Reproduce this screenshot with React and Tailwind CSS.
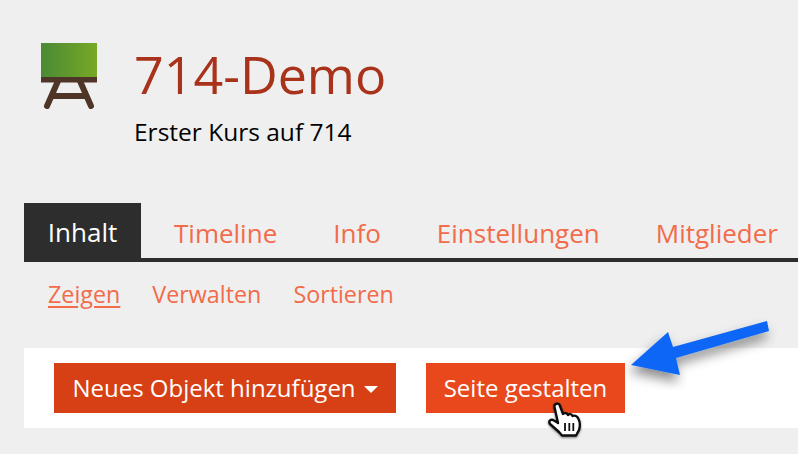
export default function App() {
  const tabs = ["Timeline", "Info", "Einstellungen", "Mitglieder"];
  return (
    <div className="relative w-[798px] h-[454px] overflow-hidden bg-[#efefef] pl-[24px] text-[#f26b4a]" style={{ fontFamily: '"Open Sans", sans-serif' }}>
      <div className="flex h-[203px] items-start">
        <svg className="mt-[43px] ml-[17px] shrink-0" width="56" height="68" viewBox="0 0 56 68">
          <defs>
            <linearGradient id="board" x1="0" x2="1" y1="0" y2="0">
              <stop offset="0" stopColor="#4a8a34" />
              <stop offset="1" stopColor="#78a826" />
            </linearGradient>
          </defs>
          <rect x="0" y="0" width="56" height="35" fill="url(#board)" />
          <path d="M17 38 L6 63 M39 38 L50 63 M13 53 H43" stroke="#4f3428" strokeWidth="6" strokeLinecap="round" fill="none" />
          <rect x="0" y="34" width="56" height="5.5" fill="#4f3428" />
        </svg>
        <div className="ml-[37px] mt-[38px]">
          <h1 className="text-[52px] leading-[72px] text-[#a8321a]">714-Demo</h1>
          <p className="text-[24.5px] leading-[34px] text-black mt-[5px]">Erster Kurs auf 714</p>
        </div>
      </div>

      <nav className="flex h-[59px] gap-[56px] border-b-4 border-[#2d2d2d] text-[26px]">
        <a className="mr-[-23px] flex h-[59px] w-[117px] shrink-0 items-center justify-center bg-[#2d2d2d] text-white">Inhalt</a>
        {tabs.map((t) => (
          <a key={t} className="flex h-[55px] items-center whitespace-nowrap pt-[5px]">{t}</a>
        ))}
      </nav>

      <div className="flex h-[86px] gap-[32px] pl-[24px] pt-[14px] text-[23.3px] leading-[36px]">
        <a className="underline underline-offset-[3px]">Zeigen</a>
        <a>Verwalten</a>
        <a>Sortieren</a>
      </div>

      <div className="flex h-[80px] items-center gap-[30px] bg-white pl-[30px] text-[24px] text-white">
        <button className="flex h-[50px] w-[342px] items-center justify-center gap-[8px] bg-[#d73f14]">
          Neues Objekt hinzufügen
          <span className="mt-[2px] h-0 w-0 border-x-[7px] border-t-[7px] border-x-transparent border-t-white" />
        </button>
        <button className="h-[50px] w-[199px] bg-[#e8481c]">Seite gestalten</button>
      </div>

      <svg className="absolute left-[625px] top-[315px]" width="155" height="75" viewBox="625 315 155 75">
        <defs>
          <filter id="shadow" x="-20%" y="-30%" width="140%" height="180%">
            <feDropShadow dx="-2" dy="7" stdDeviation="6" floodColor="#000" floodOpacity="0.45" />
          </filter>
        </defs>
        <path d="M631 365 L668 332 L673 347 L767 321 L769 331 L676 358 L680 375 Z" fill="#0a66f5" filter="url(#shadow)" />
      </svg>

      <svg className="absolute left-[545px] top-[400px]" width="40" height="42" viewBox="0 0 40 42">
        <defs>
          <filter id="handshadow" x="-30%" y="-30%" width="160%" height="160%">
            <feDropShadow dx="0" dy="1" stdDeviation="1" floodColor="#000" floodOpacity="0.5" />
          </filter>
        </defs>
        <path d="M9.500 7 C9 3 14 2.500 15 6 L18 14 C19.500 12.500 22 13 23 15 C24 13.500 27 14 27.500 16 C29.500 15 32.500 16 33.500 19 C35 22 35 27 34 30 L31 35.500 H17 L14 32 L5 24 C3 21 6 18.500 9 20.500 L13 23 Z" fill="#fff" stroke="#111" strokeWidth="2.4" strokeLinejoin="round" filter="url(#handshadow)" />
        <path d="M20 23 V31 M24.300 23 V31 M28.300 23 V31" stroke="#111" strokeWidth="1.800" />
      </svg>
    </div>
  );
}
